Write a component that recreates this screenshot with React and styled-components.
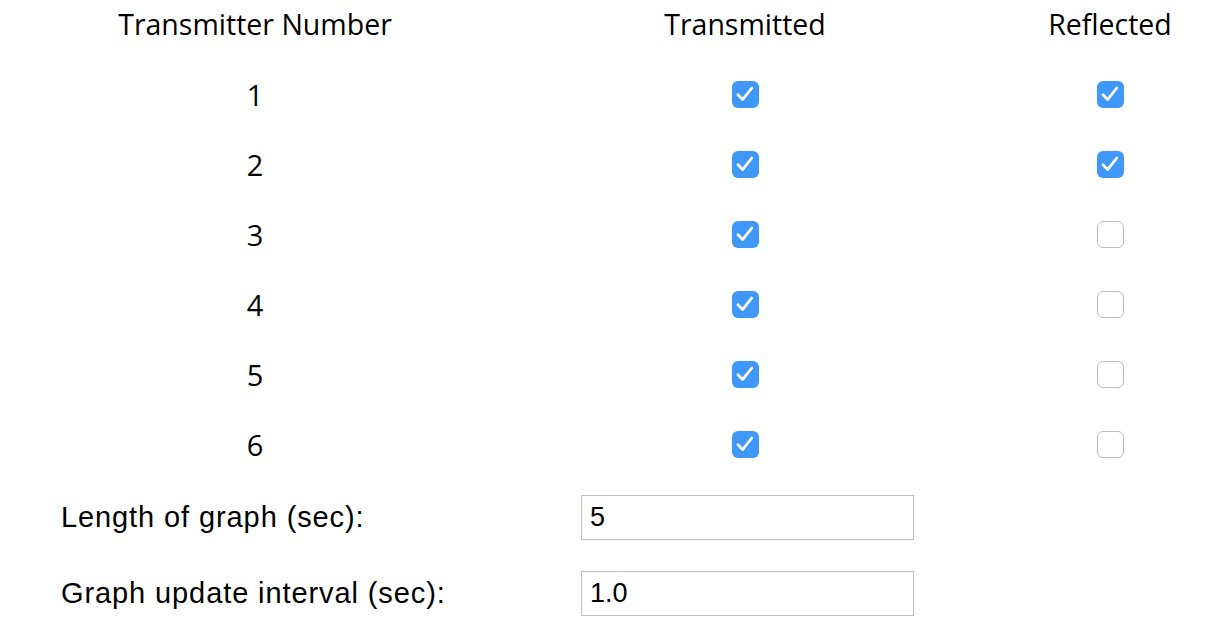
import React, { useState } from "react";
import styled, { createGlobalStyle } from "styled-components";

const GlobalStyle = createGlobalStyle`
  html, body {
    margin: 0;
    padding: 0;
    background: #ffffff;
    overflow: hidden;
  }
  body {
    font-family: "Open Sans", "Liberation Sans", sans-serif;
    color: #000;
  }
`;

const Page = styled.div`
  width: 1232px;
  height: 626px;
`;

const Grid = styled.div`
  display: grid;
  grid-template-columns: 510px 470px 260px;
  grid-auto-rows: ${(p) => p.$row}px;
  margin-top: ${(p) => p.$offset || 0}px;
`;

const HeadCell = styled.div`
  display: flex;
  align-items: center;
  justify-content: center;
  font-size: 28.5px;
  white-space: nowrap;
`;

const Cell = styled.div`
  display: flex;
  align-items: center;
  justify-content: center;
  font-size: 29px;
`;

const Box = styled.span`
  width: 27px;
  height: 27px;
  box-sizing: border-box;
  border-radius: 6px;
  display: flex;
  align-items: center;
  justify-content: center;
  cursor: pointer;
  background: ${(p) => (p.$on ? "#3f98f8" : "#ffffff")};
  border: ${(p) => (p.$on ? "none" : "1.5px solid #bcbcbc")};
`;

const Form = styled.div`
  display: flex;
  flex-direction: column;
  gap: 31px;
  padding: 16px 0 0 61px;
`;

const FormRow = styled.label`
  display: grid;
  grid-template-columns: 520px 333px;
  align-items: center;
`;

const Label = styled.span`
  font-family: "Liberation Sans", Arial, sans-serif;
  font-size: 29px;
  letter-spacing: 0.9px;
`;

const Input = styled.input`
  box-sizing: border-box;
  width: 333px;
  height: 45px;
  border: 1.5px solid #c0c0c0;
  border-radius: 0;
  padding: 0 8px;
  font-family: "Liberation Sans", Arial, sans-serif;
  font-size: 27px;
  color: #000;
  outline: none;
`;

const Check = ({ on, onToggle }) => (
  <Box $on={on} onClick={onToggle}>
    {on && (
      <svg width="20" height="18" viewBox="0 0 20 18">
        <path
          d="M3 9.8 L7.6 14.6 L16.8 3"
          fill="none"
          stroke="#fff"
          strokeWidth="2.8"
          strokeLinecap="round"
          strokeLinejoin="round"
        />
      </svg>
    )}
  </Box>
);

const initial = [
  { id: 1, tx: true, rx: true },
  { id: 2, tx: true, rx: true },
  { id: 3, tx: true, rx: false },
  { id: 4, tx: true, rx: false },
  { id: 5, tx: true, rx: false },
  { id: 6, tx: true, rx: false },
];

export default function App() {
  const [rows, setRows] = useState(initial);
  const [length, setLength] = useState("5");
  const [interval, setInterval] = useState("1.0");

  const toggle = (id, key) =>
    setRows((r) => r.map((row) => (row.id === id ? { ...row, [key]: !row[key] } : row)));

  return (
    <Page>
      <GlobalStyle />
      <Grid $row={48}>
        <HeadCell>Transmitter Number</HeadCell>
        <HeadCell>Transmitted</HeadCell>
        <HeadCell>Reflected</HeadCell>
      </Grid>
      <Grid $row={70} $offset={11}>
        {rows.map((row) => (
          <React.Fragment key={row.id}>
            <Cell>{row.id}</Cell>
            <Cell>
              <Check on={row.tx} onToggle={() => toggle(row.id, "tx")} />
            </Cell>
            <Cell>
              <Check on={row.rx} onToggle={() => toggle(row.id, "rx")} />
            </Cell>
          </React.Fragment>
        ))}
      </Grid>
      <Form>
        <FormRow>
          <Label>Length of graph (sec):</Label>
          <Input value={length} onChange={(e) => setLength(e.target.value)} />
        </FormRow>
        <FormRow>
          <Label>Graph update interval (sec):</Label>
          <Input value={interval} onChange={(e) => setInterval(e.target.value)} />
        </FormRow>
      </Form>
    </Page>
  );
}
